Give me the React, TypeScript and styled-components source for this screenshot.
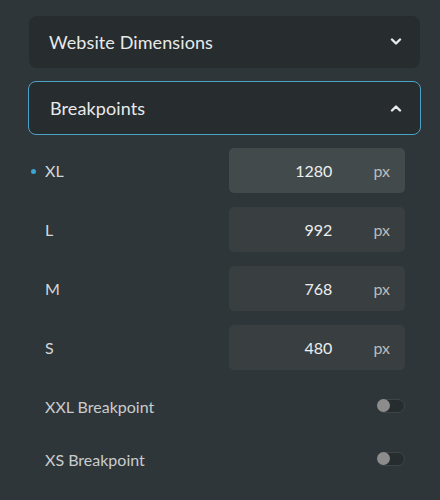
import styled, { createGlobalStyle } from 'styled-components';

const GlobalStyle = createGlobalStyle`
  html, body {
    margin: 0;
    padding: 0;
    background: #2f3639;
  }
  body {
    font-family: Lato, 'Noto Sans', sans-serif;
    color: #e6e8e8;
  }
`;

const Panel = styled.div`
  width: 440px;
  height: 500px;
  box-sizing: border-box;
  padding: 16px 19px 0 28px;
  background: #2f3639;
  display: flex;
  flex-direction: column;
`;

const Section = styled.div<{ $open?: boolean }>`
  height: ${(p) => (p.$open ? '54px' : '52px')};
  box-sizing: border-box;
  margin: ${(p) => (p.$open ? '0 0 0 0' : '0 1px 13px 1px')};
  padding: 0 18px 0 ${(p) => (p.$open ? '21px' : '20px')};
  display: flex;
  align-items: center;
  justify-content: space-between;
  background: #272c2f;
  border-radius: 8px;
  border: ${(p) => (p.$open ? '1px solid #4aa2c6' : 'none')};
  font-size: 18px;
  letter-spacing: 0.1px;
  color: #e8eaea;
`;

const Chevron = ({ up }: { up?: boolean }) => (
  <svg width='12' height='8' viewBox='0 0 12 8'>
    <path
      d={up ? 'M2 6.5 L6 2.5 L10 6.5' : 'M2 1.5 L6 5.5 L10 1.5'}
      fill='none'
      stroke='#e8eaea'
      strokeWidth='2.4'
      strokeLinecap='round'
      strokeLinejoin='round'
    />
  </svg>
);

const Rows = styled.div`
  display: flex;
  flex-direction: column;
  gap: 14px;
  padding-top: 13px;
`;

const Row = styled.div`
  display: flex;
  align-items: center;
  justify-content: space-between;
  height: 45px;
  padding-right: 16px;
`;

const Label = styled.div<{ $active?: boolean }>`
  padding-left: 17px;
  font-size: 16px;
  color: #d4d7d8;
  position: relative;

  &::before {
    content: '';
    display: ${(p) => (p.$active ? 'block' : 'none')};
    position: absolute;
    left: 3px;
    top: 50%;
    width: 5px;
    height: 5px;
    margin-top: -2px;
    border-radius: 50%;
    background: #3fa4d0;
  }
`;

const Field = styled.div<{ $active?: boolean }>`
  width: 176px;
  height: 45px;
  box-sizing: border-box;
  border-radius: 5px;
  background: ${(p) => (p.$active ? '#434a4c' : '#393e41')};
  display: flex;
  align-items: center;
  padding-right: 15px;
`;

const Value = styled.div`
  flex: 1;
  text-align: right;
  font-size: 16px;
  color: #eceeee;
  padding-right: 41px;
`;

const Unit = styled.div`
  font-size: 16px;
  color: #b8bcbd;
`;

const Toggles = styled.div`
  display: flex;
  flex-direction: column;
  padding-top: 26px;
  gap: 33px;
`;

const ToggleRow = styled.div`
  display: flex;
  align-items: center;
  justify-content: space-between;
  height: 20px;
  padding-left: 17px;
  padding-right: 16px;
  font-size: 16px;
  color: #c9cccd;
`;

const Switch = styled.div`
  width: 28px;
  height: 14px;
  box-sizing: border-box;
  border-radius: 7px;
  background: #272c2f;
  border: 1px solid #3e4548;
  position: relative;

  &::after {
    content: '';
    position: absolute;
    left: -1px;
    top: -1px;
    width: 13px;
    height: 13px;
    border-radius: 50%;
    background: #8c8c8c;
  }
`;

const breakpoints = [
  { name: 'XL', value: 1280, active: true },
  { name: 'L', value: 992 },
  { name: 'M', value: 768 },
  { name: 'S', value: 480 },
];

export default function App() {
  return (
    <>
      <GlobalStyle />
      <Panel>
        <Section>
          <span>Website Dimensions</span>
          <Chevron />
        </Section>
        <Section $open>
          <span>Breakpoints</span>
          <Chevron up />
        </Section>
        <Rows>
          {breakpoints.map((b) => (
            <Row key={b.name}>
              <Label $active={b.active}>{b.name}</Label>
              <Field $active={b.active}>
                <Value>{b.value}</Value>
                <Unit>px</Unit>
              </Field>
            </Row>
          ))}
        </Rows>
        <Toggles>
          <ToggleRow>
            <span>XXL Breakpoint</span>
            <Switch />
          </ToggleRow>
          <ToggleRow>
            <span>XS Breakpoint</span>
            <Switch />
          </ToggleRow>
        </Toggles>
      </Panel>
    </>
  );
}
